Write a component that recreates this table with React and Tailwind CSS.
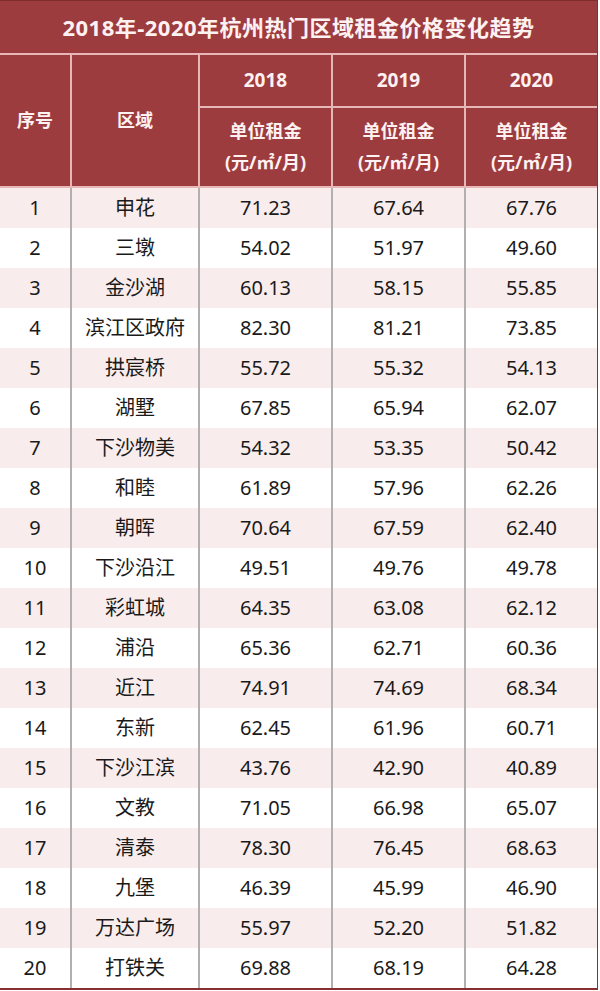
const rows = [
  [1, '申花', '71.23', '67.64', '67.76'],
  [2, '三墩', '54.02', '51.97', '49.60'],
  [3, '金沙湖', '60.13', '58.15', '55.85'],
  [4, '滨江区政府', '82.30', '81.21', '73.85'],
  [5, '拱宸桥', '55.72', '55.32', '54.13'],
  [6, '湖墅', '67.85', '65.94', '62.07'],
  [7, '下沙物美', '54.32', '53.35', '50.42'],
  [8, '和睦', '61.89', '57.96', '62.26'],
  [9, '朝晖', '70.64', '67.59', '62.40'],
  [10, '下沙沿江', '49.51', '49.76', '49.78'],
  [11, '彩虹城', '64.35', '63.08', '62.12'],
  [12, '浦沿', '65.36', '62.71', '60.36'],
  [13, '近江', '74.91', '74.69', '68.34'],
  [14, '东新', '62.45', '61.96', '60.71'],
  [15, '下沙江滨', '43.76', '42.90', '40.89'],
  [16, '文教', '71.05', '66.98', '65.07'],
  [17, '清泰', '78.30', '76.45', '68.63'],
  [18, '九堡', '46.39', '45.99', '46.90'],
  [19, '万达广场', '55.97', '52.20', '51.82'],
  [20, '打铁关', '69.88', '68.19', '64.28'],
];

const years = ['2018', '2019', '2020'];

function HeaderCell({ children, className = '' }) {
  return (
    <div className={`flex flex-col items-center justify-center border-[#e7b6b6] ${className}`}>
      {children}
    </div>
  );
}

export default function App() {
  return (
    <div className="w-[600px] h-[991px] bg-white" style={{ fontFamily: '"Noto Sans", "Noto Sans CJK SC", sans-serif' }}>
      <div className="w-[598px] border-r border-b-2 border-[#8a2f31]">
        {/* header */}
        <div className="bg-[#9d3c3e] text-[#fdf1f1] font-bold border-b-2 border-[#e7b6b6]">
          <div className="h-[55px] flex items-center justify-center text-[22px] tracking-[0.5px] border-b-2 border-[#e7b6b6] border-t border-t-[#7e2c2e]">
            2018年-2020年杭州热门区域租金价格变化趋势
          </div>
          <div className="grid grid-cols-[70px_128px_133px_133px_133px] grid-rows-[53px_78px] text-[18px]">
            <HeaderCell className="row-span-2">序号</HeaderCell>
            <HeaderCell className="row-span-2 border-l-2">区域</HeaderCell>
            {years.map((y) => (
              <HeaderCell key={y} className="border-l-2 border-b-2 text-[19px]">{y}</HeaderCell>
            ))}
            {years.map((y) => (
              <HeaderCell key={y + 'u'} className="border-l-2 leading-[31px]">
                <span>单位租金</span>
                <span>(元/㎡/月)</span>
              </HeaderCell>
            ))}
          </div>
        </div>

        {/* body */}
        <div className="text-[20px] text-[#1a1a1a]">
          {rows.map((r, i) => (
            <div
              key={r[0]}
              className={`grid grid-cols-[70px_128px_133px_133px_133px] h-[40px] ${i % 2 === 0 ? 'bg-[#f9ecec]' : 'bg-white'}`}
            >
              <div className="flex items-center justify-center">{r[0]}</div>
              <div className="flex items-center justify-center border-l-2 border-[#b0b0b0]">{r[1]}</div>
              <div className="flex items-center justify-center border-l-2 border-[#b0b0b0]">{r[2]}</div>
              <div className="flex items-center justify-center border-l-2 border-[#b0b0b0]">{r[3]}</div>
              <div className="flex items-center justify-center border-l-2 border-[#b0b0b0]">{r[4]}</div>
            </div>
          ))}
        </div>
      </div>
    </div>
  );
}
